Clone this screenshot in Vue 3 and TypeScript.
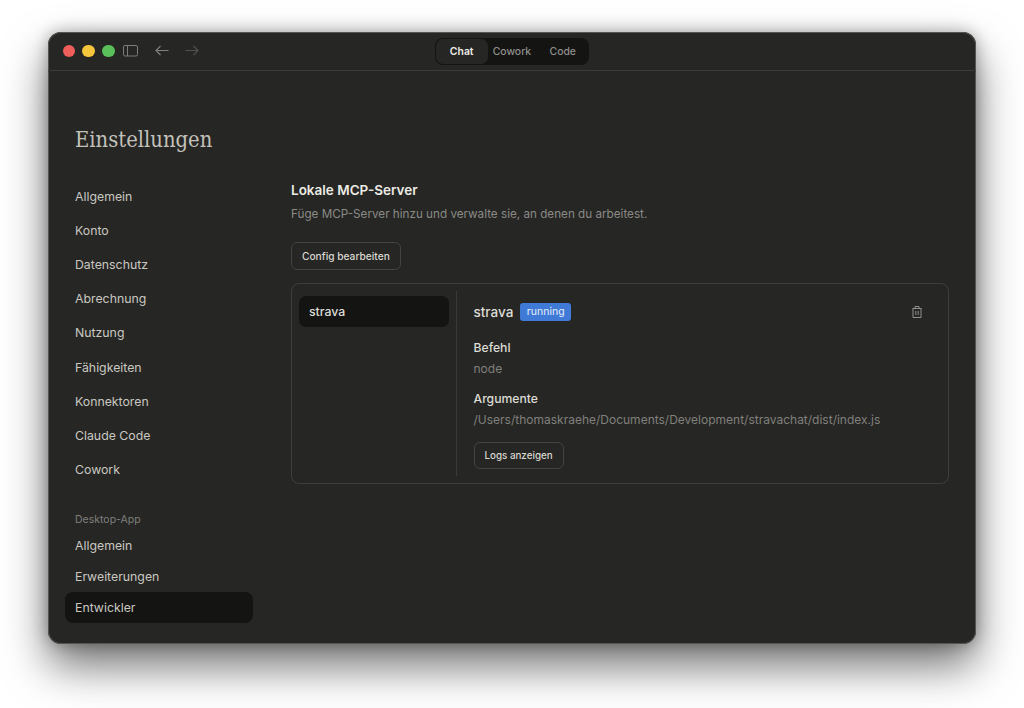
<script setup lang="ts">
const mainNav = ['Allgemein', 'Konto', 'Datenschutz', 'Abrechnung', 'Nutzung', 'Fähigkeiten', 'Konnektoren', 'Claude Code', 'Cowork']
const desktopNav = ['Allgemein', 'Erweiterungen', 'Entwickler']
const modes = ['Chat', 'Cowork', 'Code']
</script>

<template>
  <div class="page">
    <div class="window">
      <header class="titlebar">
        <div class="controls">
          <span class="light red"></span>
          <span class="light yellow"></span>
          <span class="light green"></span>
          <svg class="sidebar-icon" width="15" height="12" viewBox="0 0 15 12" fill="none" stroke="#7d7d7a">
            <rect x="0.5" y="0.5" width="14" height="10.5" rx="1.5" />
            <path d="M4.5 0.5v10.5" />
          </svg>
          <svg class="arrow" width="14" height="11" viewBox="0 0 14 11" fill="none" stroke="#80807c" stroke-width="1.1">
            <path d="M13.5 5.5H1M5.5 1 1 5.5 5.5 10" />
          </svg>
          <svg class="arrow" width="14" height="11" viewBox="0 0 14 11" fill="none" stroke="#51514f" stroke-width="1.1">
            <path d="M0.5 5.5H13M8.5 1 13 5.5 8.5 10" />
          </svg>
        </div>
        <div class="modes">
          <span v-for="m in modes" :key="m" class="mode" :class="{ on: m === 'Chat' }">{{ m }}</span>
        </div>
      </header>

      <div class="body">
        <h1 class="title">Einstellungen</h1>
        <div class="columns">
          <nav class="side">
            <a v-for="item in mainNav" :key="item" class="nav-item">{{ item }}</a>
            <div class="nav-label">Desktop-App</div>
            <a
              v-for="item in desktopNav"
              :key="item"
              class="nav-item small"
              :class="{ active: item === 'Entwickler' }"
            >{{ item }}</a>
          </nav>

          <main class="content">
            <h2 class="heading">Lokale MCP-Server</h2>
            <p class="sub">Füge MCP-Server hinzu und verwalte sie, an denen du arbeitest.</p>
            <button class="btn config">Config bearbeiten</button>

            <section class="panel">
              <div class="servers">
                <div class="server">strava</div>
              </div>
              <div class="detail">
                <div class="detail-head">
                  <span class="name">strava</span>
                  <span class="badge">running</span>
                  <svg class="trash" width="10" height="12" viewBox="0 0 10 12" fill="none" stroke="#8e8e8a">
                    <path d="M0.5 2.5h9M3 2.5V0.5h4v2M1 2.5v9h8v-9M3.8 5v4M6.2 5v4" />
                  </svg>
                </div>
                <div class="label first">Befehl</div>
                <div class="value">node</div>
                <div class="label">Argumente</div>
                <div class="value">/Users/thomaskraehe/Documents/Development/stravachat/dist/index.js</div>
                <button class="btn logs">Logs anzeigen</button>
              </div>
            </section>
          </main>
        </div>
      </div>
    </div>
  </div>
</template>

<style>
html,
body {
  margin: 0;
  background: #fff;
}
</style>

<style scoped>
.page {
  width: 1024px;
  height: 708px;
  padding: 32px 48px 64px;
  box-sizing: border-box;
  overflow: hidden;
  background: #fff;
  font-family: Inter, "Noto Sans", sans-serif;
}

.window {
  height: 612px;
  box-sizing: border-box;
  background: #262624;
  border-radius: 13px;
  box-shadow: 0 0 0 1px #555553 inset, 0 22px 44px rgba(0, 0, 0, 0.55), 0 0 16px rgba(0, 0, 0, 0.3);
  overflow: hidden;
}

.titlebar {
  height: 38px;
  border-bottom: 1px solid #3b3b39;
  position: relative;
  display: flex;
  align-items: center;
  justify-content: center;
}

.controls {
  position: absolute;
  left: 14.6px;
  top: 12.5px;
  display: flex;
  align-items: center;
}

.light {
  width: 12.4px;
  height: 12.4px;
  border-radius: 50%;
  margin-right: 7.4px;
}
.red { background: #ee5f5c; }
.yellow { background: #f5c63c; }
.green { background: #5ac05a; }

.sidebar-icon { margin: 0 16.5px 0 1.4px; }
.arrow { margin-right: 16px; }

.modes {
  display: flex;
  background: #141413;
  border-radius: 8px;
  padding: 1px 4px 1px 1px;
  height: 25px;
}

.mode {
  display: flex;
  align-items: center;
  justify-content: center;
  height: 25px;
  padding: 0 9.2px;
  font-size: 10.4px;
  font-weight: 500;
  color: #8f8f8b;
  border-radius: 7px;
}
.mode.on {
  color: #eeede6;
  background: #262624;
  font-weight: 600;
  padding: 0 14px;
  margin-right: -4px;
}

.body {
  padding: 0 27px 0 17px;
}

.title {
  margin: 0;
  padding: 54px 0 0 10px;
  height: 37px;
  font-family: "DejaVu Serif", "Liberation Serif", serif;
  font-stretch: condensed;
  font-weight: 400;
  font-size: 21.8px;
  line-height: 30px;
  color: #c2c1ba;
}

.columns {
  display: flex;
  margin-top: 17px;
}

.side {
  width: 188px;
  flex: none;
  display: flex;
  flex-direction: column;
}

.nav-item {
  height: 34.2px;
  display: flex;
  align-items: center;
  padding: 0 10px;
  font-size: 12.3px;
  color: #c9c8c1;
  border-radius: 8px;
}
.nav-item.small { height: 31px; }
.nav-item.active {
  background: #141413;
}

.nav-label {
  margin: 25.5px 0 0;
  padding: 0 10px;
  height: 18px;
  font-size: 10.5px;
  line-height: 16px;
  color: #7f7f7b;
}

.content {
  margin-left: 38px;
  padding-top: 1px;
  flex: 1;
  min-width: 0;
}

.heading {
  margin: 0;
  font-size: 13.5px;
  line-height: 20px;
  font-weight: 600;
  color: #ecebe4;
}

.sub {
  margin: 3.5px 0 0;
  font-size: 11.7px;
  line-height: 20px;
  color: #8a8a86;
}

.btn {
  display: block;
  box-sizing: border-box;
  height: 28px;
  padding: 0 10px;
  font-family: inherit;
  font-size: 10.2px;
  font-weight: 500;
  color: #d9d8d1;
  background: transparent;
  border: 1px solid #434341;
  border-radius: 6px;
}

.config { margin-top: 18.5px; }

.panel {
  margin-top: 13px;
  display: flex;
  height: 201px;
  box-sizing: border-box;
  border: 1px solid #3e3e3c;
  border-radius: 8px;
  padding: 7px 0 7px 7px;
}

.servers {
  width: 158px;
  flex: none;
  box-sizing: border-box;
  padding: 5px 7px 0 0;
  border-right: 1px solid #3a3a38;
}

.server {
  height: 31px;
  display: flex;
  align-items: center;
  padding: 0 10px;
  font-size: 12.3px;
  font-weight: 500;
  color: #dddcd5;
  border-radius: 7px;
  background: #141413;
}

.detail {
  flex: 1;
  padding: 5px 0 0 16.5px;
  min-width: 0;
}

.detail-head {
  height: 31px;
  display: flex;
  align-items: center;
}

.name {
  font-size: 13.5px;
  font-weight: 500;
  color: #dddcd5;
}

.badge {
  margin-left: 7px;
  height: 18px;
  display: flex;
  align-items: center;
  padding: 0 6.5px;
  font-size: 10.5px;
  color: #e6eefb;
  background: #3f7ad6;
  border-radius: 3px;
}

.trash {
  margin-left: auto;
  margin-right: 26px;
}

.label {
  margin-top: 12px;
  font-size: 12.2px;
  line-height: 18px;
  font-weight: 500;
  color: #dddcd5;
}
.label.first { margin-top: 11.5px; }

.value {
  margin-top: 3px;
  font-size: 12px;
  line-height: 18px;
  color: #80807c;
}

.logs {
  margin-top: 13px;
  height: 27px;
  font-size: 9.8px;
}
</style>
